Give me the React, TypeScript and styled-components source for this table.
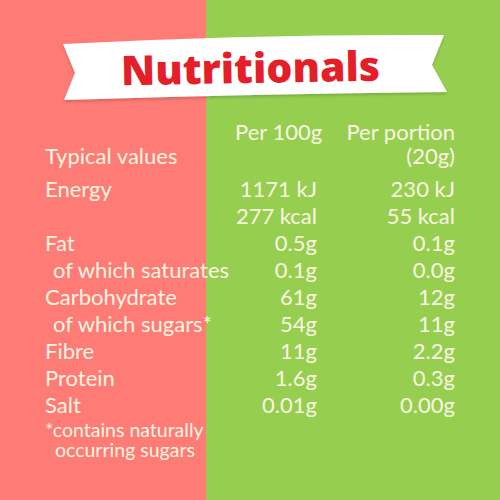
import * as React from 'react';
import styled, { createGlobalStyle } from 'styled-components';

const pink = '#ff7b75';
const green = '#96cf50';
const cream = '#faf5e1';

const GlobalStyle = createGlobalStyle`
  html, body { margin: 0; padding: 0; }
  body { font-family: Lato, "Open Sans", sans-serif; }
`;

type Row = { label: string; per100: string; portion: string; sub?: boolean };

const rows: Row[] = [
  { label: 'Energy', per100: '1171 kJ', portion: '230 kJ' },
  { label: '', per100: '277 kcal', portion: '55 kcal' },
  { label: 'Fat', per100: '0.5g', portion: '0.1g' },
  { label: 'of which saturates', per100: '0.1g', portion: '0.0g', sub: true },
  { label: 'Carbohydrate', per100: '61g', portion: '12g' },
  { label: 'of which sugars*', per100: '54g', portion: '11g', sub: true },
  { label: 'Fibre', per100: '11g', portion: '2.2g' },
  { label: 'Protein', per100: '1.6g', portion: '0.3g' },
  { label: 'Salt', per100: '0.01g', portion: '0.00g' },
];

const Page = styled.div`
  width: 500px;
  height: 500px;
  overflow: hidden;
  background: linear-gradient(to right, ${pink} 206px, ${green} 206px);
  color: ${cream};
  font-family: Lato, "Open Sans", sans-serif;
`;

const Banner = styled.div`
  position: relative;
  height: 120px;
  display: flex;
  align-items: flex-start;
  justify-content: center;
`;

const BannerShape = styled.svg`
  position: absolute;
  inset: 0;
`;

const Title = styled.h1`
  position: relative;
  margin: 39px 0 0 0;
  font-family: "Open Sans", Lato, sans-serif;
  font-weight: 800;
  font-size: 41px;
  line-height: 56px;
  color: #e41f2a;
  transform: rotate(-1deg);
`;

const Table = styled.div`
  display: grid;
  grid-template-columns: 190px 82px 138px;
  padding-left: 45px;
  font-size: 22px;
`;

const HeadCell = styled.div<{ $align?: 'left' | 'right' }>`
  line-height: 24px;
  text-align: ${(p) => p.$align ?? 'right'};
  white-space: nowrap;
`;

const Label = styled.div<{ $sub?: boolean }>`
  line-height: 27px;
  white-space: nowrap;
  padding-left: ${(p) => (p.$sub ? '8px' : '0')};
`;

const Value = styled.div`
  line-height: 27px;
  text-align: right;
  white-space: nowrap;
`;

const Spacer = styled.div<{ $h: number }>`
  grid-column: 1 / -1;
  height: ${(p) => p.$h}px;
`;

const Footnote = styled.div`
  padding-left: 45px;
  margin-top: 2px;
  font-size: 19.5px;
  line-height: 20px;
`;

const FootLine = styled.div<{ $indent?: boolean }>`
  padding-left: ${(p) => (p.$indent ? '10px' : '0')};
`;

export default function App() {
  return (
    <Page>
      <GlobalStyle />
      <Banner>
        <BannerShape width="500" height="120" viewBox="0 0 500 120">
          <defs>
            <filter id="sh" x="-5%" y="-20%" width="110%" height="150%">
              <feDropShadow dx="0" dy="2" stdDeviation="1.5" floodColor="#000" floodOpacity="0.18" />
            </filter>
          </defs>
          <path
            d="M63 44 Q250 34 444 35 L432 65 L447 92 Q250 94 64 100 L75 73 Z"
            fill="#ffffff"
            filter="url(#sh)"
          />
        </BannerShape>
        <Title>Nutritionals</Title>
      </Banner>
      <Table>
        <HeadCell />
        <HeadCell>Per 100g</HeadCell>
        <HeadCell>Per portion</HeadCell>
        <HeadCell $align="left">Typical values</HeadCell>
        <HeadCell />
        <HeadCell>(20g)</HeadCell>
        <Spacer $h={7} />
        {rows.map((r, i) => (
          <React.Fragment key={i}>
            <Label $sub={r.sub}>{r.label}</Label>
            <Value>{r.per100}</Value>
            <Value>{r.portion}</Value>
          </React.Fragment>
        ))}
      </Table>
      <Footnote>
        <FootLine>*contains naturally</FootLine>
        <FootLine $indent>occurring sugars</FootLine>
      </Footnote>
    </Page>
  );
}
